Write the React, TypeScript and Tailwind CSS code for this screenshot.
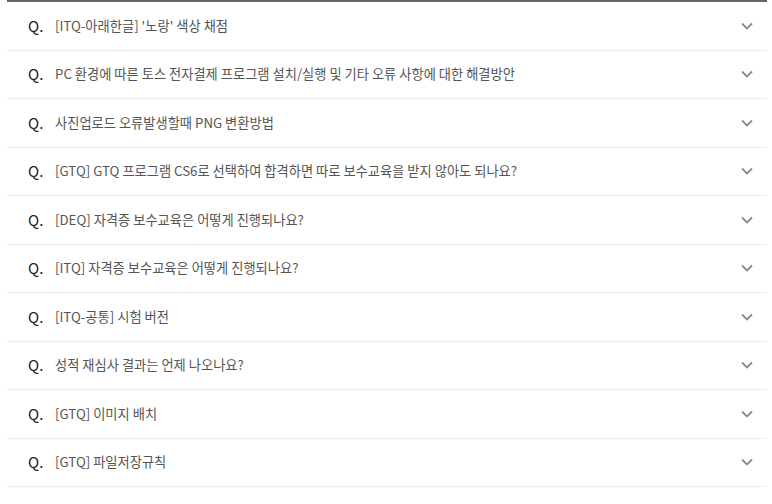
const questions = [
  "[ITQ-아래한글] '노랑' 색상 채점",
  'PC 환경에 따른 토스 전자결제 프로그램 설치/실행 및 기타 오류 사항에 대한 해결방안',
  '사진업로드 오류발생할때 PNG 변환방법',
  '[GTQ] GTQ 프로그램 CS6로 선택하여 합격하면 따로 보수교육을 받지 않아도 되나요?',
  '[DEQ] 자격증 보수교육은 어떻게 진행되나요?',
  '[ITQ] 자격증 보수교육은 어떻게 진행되나요?',
  '[ITQ-공통] 시험 버전',
  '성적 재심사 결과는 언제 나오나요?',
  '[GTQ] 이미지 배치',
  '[GTQ] 파일저장규칙',
];

function Chevron() {
  return (
    <svg width="12" height="8" viewBox="0 0 12 8" fill="none" className="text-[#8a8a8a]">
      <path d="M1 1.5 6 6.5 11 1.5" stroke="currentColor" strokeWidth="1.8" />
    </svg>
  );
}

export default function App() {
  return (
    <div
      className="min-h-[504px] bg-white pl-[7px] pr-[5px]"
      style={{ fontFamily: '"Noto Sans CJK KR", "Noto Sans", sans-serif' }}
    >
      <ul className="border-t-2 border-[#666666]">
        {questions.map((q) => (
          <li
            key={q}
            className="flex h-[48.5px] items-center border-b border-[#ebebeb] pl-[21px] pr-[14px]"
          >
            <span className="w-[27px] shrink-0 text-[15px] font-normal text-[#222222]">Q.</span>
            <span className="flex-1 text-[13.25px] text-[#555555]">{q}</span>
            <Chevron />
          </li>
        ))}
      </ul>
    </div>
  );
}
